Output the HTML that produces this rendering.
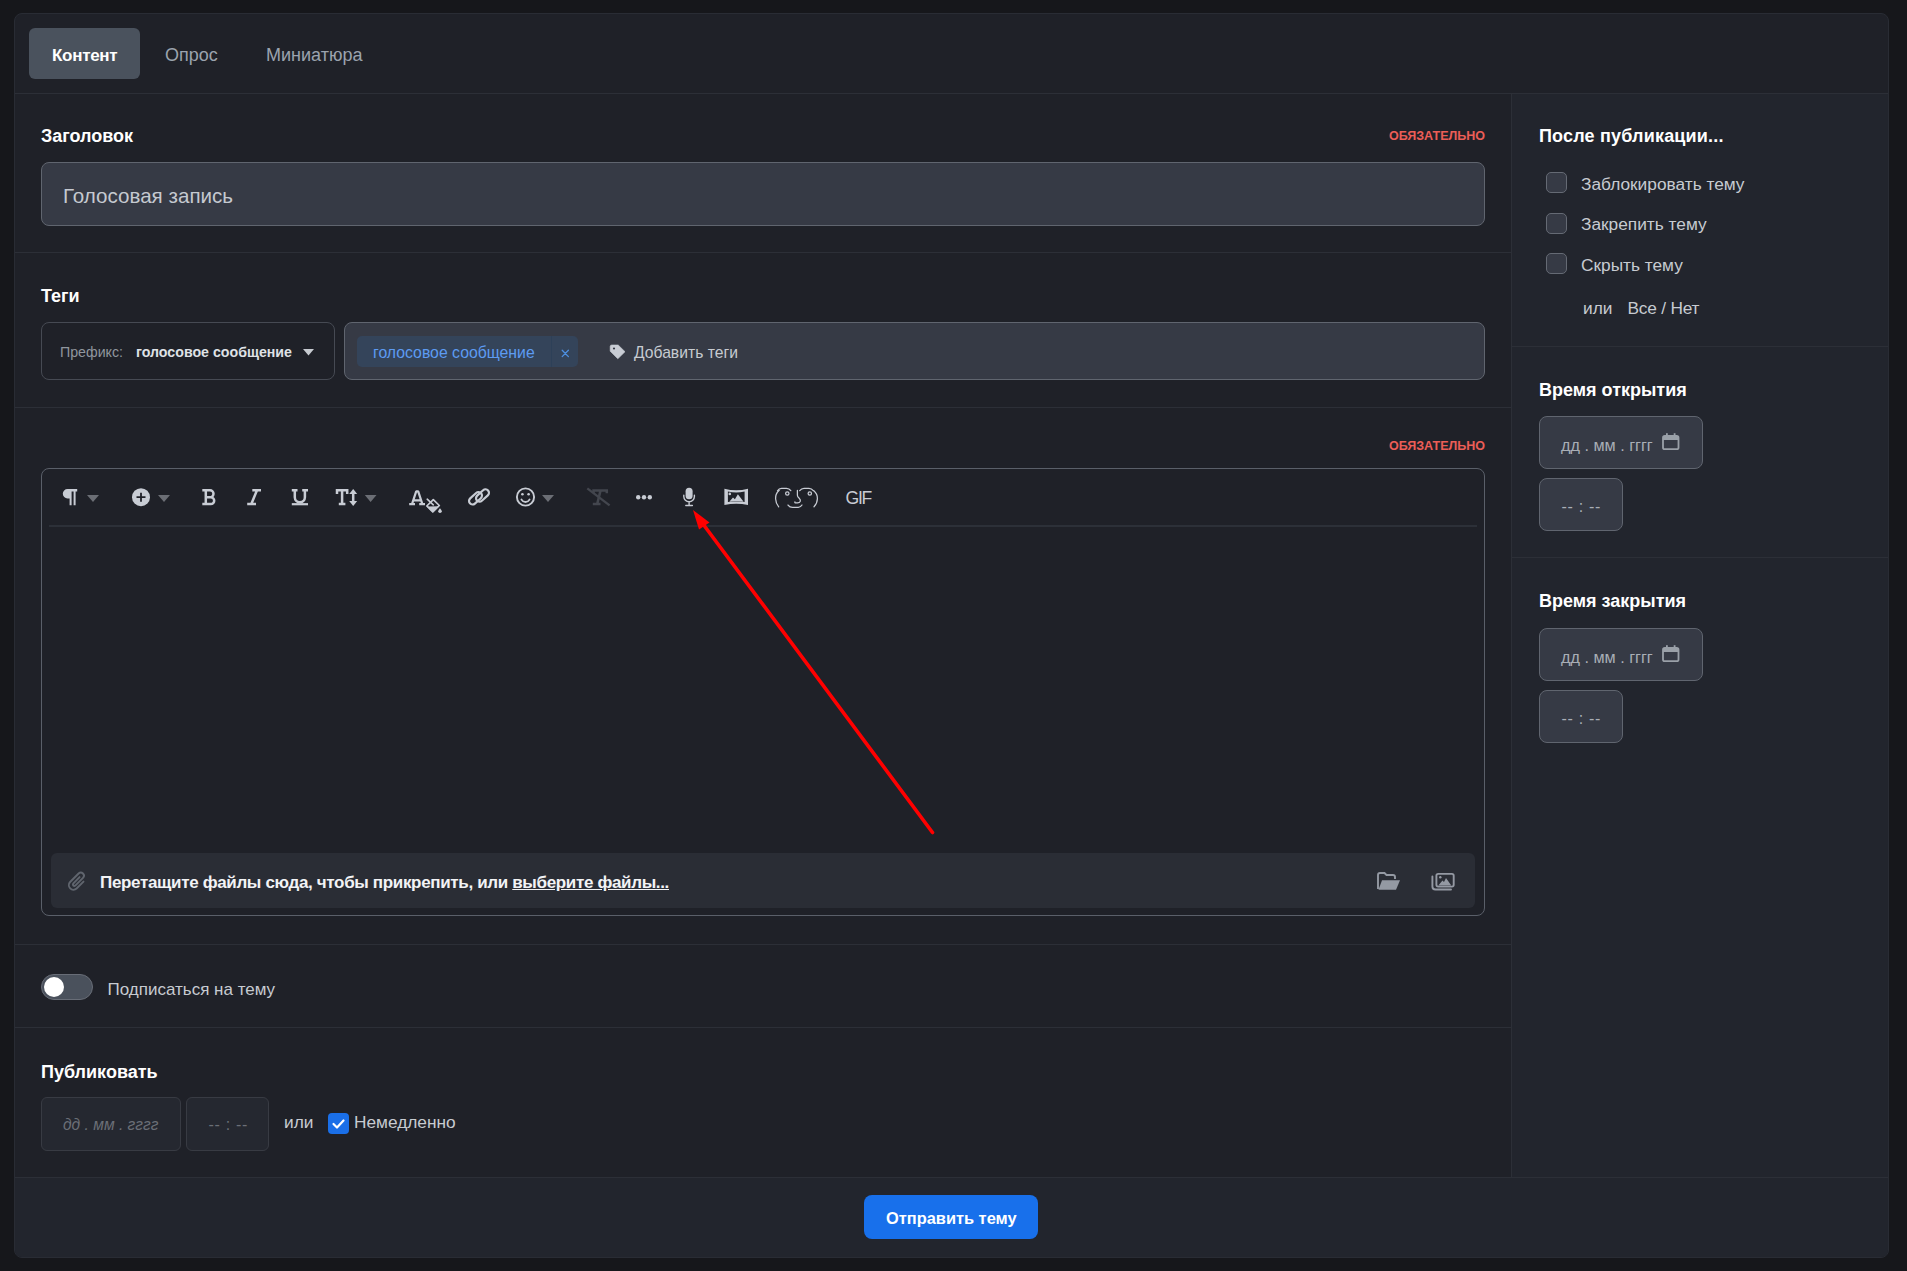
<!DOCTYPE html>
<html><head><meta charset="utf-8">
<style>
html,body{margin:0;padding:0;}
body{width:1907px;height:1271px;background:#16171b;position:relative;overflow:hidden;font-family:"Liberation Sans",sans-serif;}
.a{position:absolute;}
.t{position:absolute;white-space:nowrap;line-height:1;}
.panel{left:14px;top:13px;width:1875px;height:1245px;box-sizing:border-box;border:1px solid #292c34;border-radius:8px;background:#1f2128;overflow:hidden;}
.hl{position:absolute;height:1px;background:#2c2f37;}
.vl{position:absolute;width:1px;background:#2c2f37;}
.h{font-weight:bold;color:#ffffff;font-size:18px;}
.req{font-weight:bold;color:#ec5e57;font-size:12.5px;}
.lbl{color:#c7cbd1;font-size:17.3px;}
.inp{position:absolute;box-sizing:border-box;border:1px solid #60656f;background:#363a45;border-radius:8px;}
.cb{position:absolute;box-sizing:border-box;width:21px;height:21px;border:1px solid #656a74;background:#363a45;border-radius:5px;}
svg{position:absolute;overflow:visible;}
</style></head>
<body>
<div class="a panel"></div>
<!-- tab bar -->
<div class="a" style="left:29px;top:28px;width:111px;height:51px;background:#4a525d;border-radius:6px;"></div>
<div class="t" style="left:52px;top:46.8px;font-size:17px;font-weight:bold;color:#fff;letter-spacing:-0.3px;">Контент</div>
<div class="t" style="left:165px;top:45.8px;font-size:18px;color:#9ba3ae;">Опрос</div>
<div class="t" style="left:266px;top:45.8px;font-size:18px;color:#9ba3ae;">Миниатюра</div>
<div class="hl" style="left:15px;top:93px;width:1873px;"></div>

<!-- sidebar bg -->
<div class="a" style="left:1512px;top:94px;width:376px;height:1083px;background:#22252d;"></div>
<div class="vl" style="left:1511px;top:94px;height:1083px;"></div>
<!-- footer -->
<div class="a" style="left:15px;top:1178px;width:1873px;height:79px;background:#22252d;border-radius:0 0 7px 7px;"></div>
<div class="hl" style="left:15px;top:1177px;width:1873px;"></div>

<!-- main section lines -->
<div class="hl" style="left:15px;top:252px;width:1496px;"></div>
<div class="hl" style="left:15px;top:407px;width:1496px;"></div>
<div class="hl" style="left:15px;top:944px;width:1496px;"></div>
<div class="hl" style="left:15px;top:1027px;width:1496px;"></div>
<!-- sidebar lines -->
<div class="hl" style="left:1512px;top:346px;width:376px;"></div>
<div class="hl" style="left:1512px;top:557px;width:376px;"></div>

<!-- Section: title -->
<div class="t h" style="left:41px;top:126.8px;">Заголовок</div>
<div class="t req" style="right:422px;top:130.2px;">ОБЯЗАТЕЛЬНО</div>
<div class="inp" style="left:41px;top:162px;width:1444px;height:64px;"></div>
<div class="t" style="left:63px;top:185.6px;font-size:20.6px;color:#c5c9d0;">Голосовая запись</div>

<!-- Section: tags -->
<div class="t h" style="left:41px;top:286.8px;">Теги</div>
<div class="a" style="left:41px;top:322px;width:294px;height:58px;box-sizing:border-box;border:1px solid #464a53;border-radius:8px;"></div>
<div class="t" style="left:60px;top:345px;font-size:14.2px;color:#90969e;">Префикс:</div>
<div class="t" style="left:136px;top:345px;font-size:14.2px;font-weight:bold;color:#dfe2e6;">голосовое сообщение</div>
<svg style="left:303px;top:349px;" width="11" height="7" viewBox="0 0 11 7"><path d="M0 0H11L5.5 6.5Z" fill="#c7cbd1"/></svg>

<div class="inp" style="left:344px;top:322px;width:1141px;height:58px;"></div>
<div class="a" style="left:357px;top:336px;width:221px;height:31px;background:#34445a;border-radius:5px;"></div>
<div class="a" style="left:551px;top:336px;width:1px;height:31px;background:#2d4058;"></div>
<div class="t" style="left:373px;top:344.6px;font-size:15.8px;color:#5d9bf2;">голосовое сообщение</div>
<svg style="left:0;top:0;" width="1907" height="400" viewBox="0 0 1907 400"><path d="M562.2 350.3L568.4 356.6M568.4 350.3L562.2 356.6" stroke="#4d8fe0" stroke-width="1.3" stroke-linecap="round"/></svg>
<svg style="left:0;top:0;" width="1907" height="400" viewBox="0 0 1907 400"><path d="M610.2 346.5V351.2L617.8 358.8L625 351.7L618.2 345H611.7Q610.2 345 610.2 346.5Z" fill="#c8ccd4" stroke="#c8ccd4" stroke-width="0.6" stroke-linejoin="round"/><circle cx="614" cy="348.5" r="1.1" fill="#363a45"/></svg>
<div class="t" style="left:634px;top:344.6px;font-size:15.7px;color:#c7cbd1;">Добавить теги</div>

<!-- Section: editor -->
<div class="t req" style="right:422px;top:440px;">ОБЯЗАТЕЛЬНО</div>
<div class="a" style="left:41px;top:468px;width:1444px;height:448px;box-sizing:border-box;border:1px solid #5a5f69;border-radius:8px;"></div>
<div class="a" style="left:49px;top:525px;width:1428px;height:2px;background:#2c3038;"></div>
<svg style="left:0;top:0;" width="1907" height="1271" viewBox="0 0 1907 1271">
<g fill="#c8ccd4" stroke="none">
 <!-- pilcrow -->
 <path d="M67.5 489H77.2V491.4H75.6V505.2H73.6V491.4H71.6V505.2H69.6V498.4H67.5A4.7 4.7 0 0 1 67.5 489Z"/>
 <!-- plus circle -->
 <circle cx="141" cy="497.2" r="9"/>
</g>
<g fill="#6b6e75">
 <path d="M87 495H99L93 502Z"/>
 <path d="M158 495H170L164 502Z"/>
 <path d="M364.8 495H376.5L370.6 502Z"/>
 <path d="M542 495H554L548 502Z"/>
</g>
<path d="M136.5 497.2H145.5M141 492.7V501.7" stroke="#1f2128" stroke-width="1.8"/>
<g fill="none" stroke="#c8ccd4" stroke-width="2.5" stroke-linecap="butt">
 <!-- B -->
 <path d="M202.3 490.3H210A3.5 3.5 0 0 1 210 497.3H205.8M202.3 504.1H210.8A3.4 3.4 0 0 0 210.8 497.3H205.8M205.8 490.3V504.1"/>
 <!-- I -->
 <path d="M252.3 490.3H261M247.2 504H256M257 490.3L251.3 504"/>
 <!-- U -->
 <path d="M291.8 490.3H297.5M302.2 490.3H308M294.8 490.3V497.2A5 5 0 0 0 304.9 497.2V490.3"/>
 <path d="M291.8 504.2H308" stroke-width="2.2"/>
 <!-- T -->
 <path d="M337 494V490.3H347.2V494M342.1 490.3V504.1M338.8 504.1H345.4"/>
 <!-- height arrows -->
 <path d="M353.2 491.5V503"/>
 <!-- A -->
 <path d="M409.2 504.1H415M419.2 504.1H425M412 504.1L416.2 491.3H418.2L422.4 504.1M413.5 500.3H421" stroke-width="2.2" stroke-linejoin="bevel"/>
</g>
<g fill="#c8ccd4">
 <path d="M349.2 494L353.2 489L357.2 494Z"/>
 <path d="M349.2 501L353.2 506L357.2 501Z"/>
 <!-- bucket fill -->
 <path d="M426.8 506.5L439.5 506.3L432.8 512.5Z"/>
 <path d="M440 508.2Q441.8 510.3 441.8 511.2A1.8 1.8 0 0 1 438.2 511.2Q438.2 510.3 440 508.2Z"/>
</g>
<path d="M433.3 499.7L439.3 505.5L432.8 511.8L426.8 506L433.3 499.7Z" fill="none" stroke="#c8ccd4" stroke-width="1.7" stroke-linejoin="round"/>
<path d="M427.2 499.2L433.3 504.8" stroke="#c8ccd4" stroke-width="1.6" stroke-linecap="round"/>
<g fill="none" stroke="#c8ccd4" stroke-width="2.2">
 <!-- link -->
 <rect x="468" y="494.8" width="15" height="7" rx="3.5" transform="rotate(-42 475.5 498.3)"/>
 <rect x="475" y="492" width="15" height="7" rx="3.5" transform="rotate(-42 482.5 495.5)"/>
</g>
<g fill="none" stroke="#c8ccd4" stroke-width="1.9">
 <!-- smiley -->
 <circle cx="525.5" cy="497" r="8.6"/>
 <path d="M521.5 499.6A4.6 4.6 0 0 0 529.5 499.6" stroke-linecap="round"/>
</g>
<g fill="#c8ccd4">
 <circle cx="522.4" cy="494.2" r="1.3"/>
 <circle cx="528.6" cy="494.2" r="1.3"/>
 <!-- dots -->
 <circle cx="638.2" cy="497.3" r="2.2"/>
 <circle cx="644" cy="497.3" r="2.2"/>
 <circle cx="649.8" cy="497.3" r="2.2"/>
</g>
<!-- clear format -->
<g fill="none" stroke="#43464e" stroke-width="2.3">
 <path d="M593.5 493V490.6H606.8V493.2M600.5 490.6L597.3 503.6M592.8 504H600.5" stroke-width="2.5"/>
 <path d="M587.3 488.4L609.6 505.4"/>
</g>
<!-- mic -->
<rect x="685.6" y="487.8" width="7" height="11.5" rx="3.5" fill="#c8ccd4"/>
<path d="M683.8 495.3V496.5A5.3 5.3 0 0 0 694.4 496.5V495.3M689.1 502V505.2M685.8 505.5H692.4" fill="none" stroke="#c8ccd4" stroke-width="1.4" stroke-linecap="round"/>
<!-- panorama -->
<path d="M724.4 488.8Q736.2 491.8 748 488.8V505.1Q736.2 502.3 724.4 505.1Z" fill="#c8ccd4"/>
<path d="M727.9 491.6Q736.2 493.6 744.6 491.6V501.9Q736.2 500.9 727.9 501.9Z" fill="#1f2128"/>
<path d="M729.3 501.8L733 497.4L734.9 499.2L737.9 494.2L743.6 501.8Q736.2 500.9 729.3 501.8Z" fill="#c8ccd4"/>
<circle cx="729.8" cy="493.9" r="1.3" fill="#c8ccd4"/>
<!-- lenny -->
<g fill="none" stroke="#c8ccd4" stroke-width="1.25" stroke-linecap="round" stroke-linejoin="round">
 <path d="M779.2 490.3Q775.2 494 775.6 498.7Q775.8 503.5 778.7 506.8"/>
 <path d="M813.6 490.6Q817.6 494 817.4 498.7Q817.2 503.5 814 506.8"/>
 <path d="M777.5 490.8Q779 488.3 781.5 488.3H786.5Q789.2 488.3 790.8 490.7"/>
 <path d="M799.7 490.7Q801.5 488.3 804 488.3H809Q811.6 488.3 813.3 490.7"/>
 <circle cx="787.3" cy="493.5" r="1.7"/>
 <circle cx="809.8" cy="493.5" r="1.7"/>
 <path d="M797.4 490.4V495.3Q797.4 496.8 799.2 498.3Q800.8 500 800.3 501.3Q799.6 502.9 797.5 502.9H795.2Q794.7 502.9 794.9 501.9"/>
 <path d="M788 505Q789.8 507.4 792.5 507.4H798.3Q800.4 507.4 802 505"/>
</g>
</svg>
<div class="t" style="left:845.5px;top:489.5px;font-size:17.6px;color:#c8ccd4;letter-spacing:-1.3px;">GIF</div>


<div class="a" style="left:51px;top:853px;width:1424px;height:55px;background:#2a2d35;border-radius:6px;"></div>
<div class="t" style="left:100px;top:873.6px;font-size:17px;letter-spacing:-0.34px;font-weight:bold;color:#f2f3f5;">Перетащите файлы сюда, чтобы прикрепить, или <span style="text-decoration:underline;">выберите файлы...</span></div>

<!-- Section: subscribe -->
<div class="a" style="left:41px;top:974px;width:52px;height:26px;box-sizing:border-box;background:#4a515c;border:1px solid #686d77;border-radius:13px;"></div>
<div class="a" style="left:44px;top:977px;width:20px;height:20px;background:#fff;border-radius:50%;"></div>
<div class="t lbl" style="left:107.5px;top:981.3px;font-size:17px;">Подписаться на тему</div>

<!-- Section: publish -->
<div class="t h" style="left:41px;top:1062.8px;">Публиковать</div>
<div class="a" style="left:41px;top:1097px;width:140px;height:54px;box-sizing:border-box;background:#252830;border:1px solid #383b43;border-radius:6px;"></div>
<div class="t" style="left:63px;top:1117px;font-size:15.6px;font-style:italic;color:#6b6f77;">дд . мм . гггг</div>
<div class="a" style="left:186px;top:1097px;width:83px;height:54px;box-sizing:border-box;background:#252830;border:1px solid #383b43;border-radius:6px;"></div>
<div class="t" style="left:208.5px;top:1117px;font-size:16px;letter-spacing:0.7px;color:#6b6f77;">-- : --</div>
<div class="t lbl" style="left:284px;top:1113.8px;">или</div>
<div class="a" style="left:328px;top:1113px;width:21px;height:21px;background:#1a6fe8;border-radius:4px;"></div>
<svg style="left:328px;top:1113px;" width="21" height="21" viewBox="0 0 21 21"><path d="M5.5 11L9 14.5 15.5 7.5" fill="none" stroke="#fff" stroke-width="2.2" stroke-linecap="round" stroke-linejoin="round"/></svg>
<div class="t lbl" style="left:354px;top:1113.8px;">Немедленно</div>

<!-- footer button -->
<div class="a" style="left:864px;top:1195px;width:174px;height:44px;background:#1870eb;border-radius:8px;"></div>
<div class="t" style="left:886px;top:1210.2px;font-size:16.4px;font-weight:bold;color:#fff;">Отправить тему</div>

<!-- sidebar -->
<div class="t h" style="left:1539px;top:126.8px;letter-spacing:0.18px;">После публикации...</div>
<div class="cb" style="left:1546px;top:172px;"></div>
<div class="t lbl" style="left:1581px;top:175.8px;">Заблокировать тему</div>
<div class="cb" style="left:1546px;top:213px;"></div>
<div class="t lbl" style="left:1581px;top:216.3px;">Закрепить тему</div>
<div class="cb" style="left:1546px;top:253px;"></div>
<div class="t lbl" style="left:1581px;top:256.8px;">Скрыть тему</div>
<div class="t lbl" style="left:1583px;top:299.5px;">или</div>
<div class="t lbl" style="left:1627.5px;top:299.5px;letter-spacing:-0.2px;">Все / Нет</div>

<div class="t h" style="left:1539px;top:380.9px;">Время открытия</div>
<div class="inp" style="left:1539px;top:416px;width:164px;height:53px;"></div>
<div class="t" style="left:1561px;top:437px;font-size:16.2px;color:#a9aeb6;">дд . мм . гггг</div>
<div class="inp" style="left:1539px;top:478px;width:84px;height:53px;"></div>
<div class="t" style="left:1561.5px;top:498.5px;font-size:16px;letter-spacing:0.7px;color:#a9aeb6;">-- : --</div>

<div class="t h" style="left:1539px;top:592.2px;">Время закрытия</div>
<div class="inp" style="left:1539px;top:628px;width:164px;height:53px;"></div>
<div class="t" style="left:1561px;top:649px;font-size:16.2px;color:#a9aeb6;">дд . мм . гггг</div>
<div class="inp" style="left:1539px;top:690px;width:84px;height:53px;"></div>
<div class="t" style="left:1561.5px;top:710.5px;font-size:16px;letter-spacing:0.7px;color:#a9aeb6;">-- : --</div>

<svg style="left:0;top:0;" width="1907" height="1271" viewBox="0 0 1907 1271">
<!-- paperclip -->
<path d="M82.8 879.4L75.5 886.7A3 3 0 0 1 71.3 882.5L79.5 874.3A4.3 4.3 0 0 1 85.6 880.4L77.3 888.7" fill="none" stroke="#60656e" stroke-width="0"/>
<path d="M83.5 881.6L76.6 888.5A4.6 4.6 0 0 1 70.1 882L78.6 873.5A3.1 3.1 0 0 1 83 877.9L75.3 885.6A1.5 1.5 0 0 1 73.2 883.5L79.6 877.1" fill="none" stroke="#60656e" stroke-width="1.9" stroke-linecap="round"/>
<!-- folder open -->
<path d="M1378 889V875A2 2 0 0 1 1380 873H1384.5L1386.5 875H1393A2 2 0 0 1 1395 877V879" fill="none" stroke="#9499a3" stroke-width="1.9"/>
<path d="M1378.5 889.8L1382 880.3H1400L1396 889.8Z" fill="#9499a3"/>
<!-- images -->
<rect x="1436.4" y="873.9" width="17.3" height="12.7" rx="1.8" fill="none" stroke="#9499a3" stroke-width="1.9"/>
<path d="M1432.4 876.5V886.5A3 3 0 0 0 1435.4 889.5H1451" fill="none" stroke="#9499a3" stroke-width="1.9" stroke-linecap="round"/>
<path d="M1438.3 885.5L1442.5 880.5L1444 882L1446 878L1451.3 885.5Z" fill="#9499a3"/>
<circle cx="1440.3" cy="877.3" r="1.2" fill="#9499a3"/>
<!-- calendars -->
<g fill="none" stroke="#9aa0a8" stroke-width="1.8">
 <rect x="1663" y="436" width="15.5" height="13.2" rx="1.8"/>
 <rect x="1663" y="648" width="15.5" height="13.2" rx="1.8"/>
</g>
<g fill="#9aa0a8">
 <rect x="1663" y="436" width="15.5" height="4"/>
 <rect x="1666" y="433.2" width="1.8" height="4"/>
 <rect x="1673.7" y="433.2" width="1.8" height="4"/>
 <rect x="1663" y="648" width="15.5" height="4"/>
 <rect x="1666" y="645.2" width="1.8" height="4"/>
 <rect x="1673.7" y="645.2" width="1.8" height="4"/>
</g>
</svg>
<!-- arrow -->
<svg style="left:0;top:0;" width="1907" height="1271" viewBox="0 0 1907 1271">
<line x1="932.5" y1="832.5" x2="703" y2="524" stroke="#ff0000" stroke-width="3.6" stroke-linecap="round"/>
<path d="M693 510L709.5 522.5 699 529.5Z" fill="#ff0000"/>
</svg>
</body></html>
